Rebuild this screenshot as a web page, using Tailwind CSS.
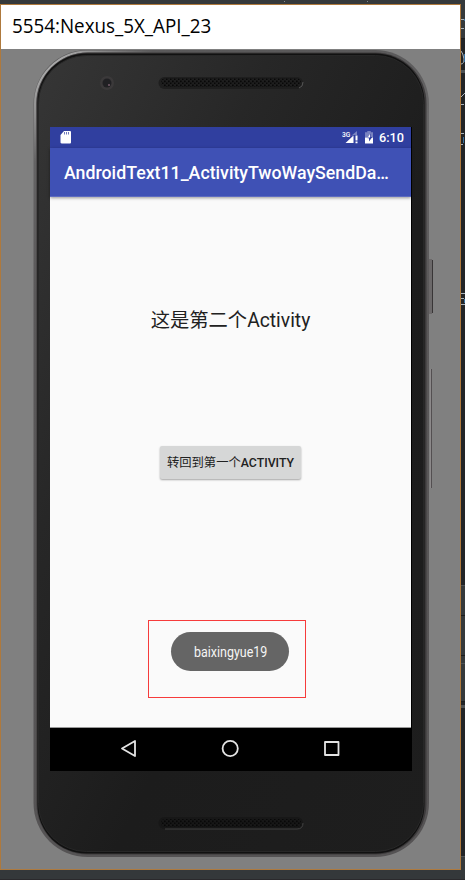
<!DOCTYPE html>
<html lang="zh-CN">
<head>
<meta charset="utf-8">
<title>5554:Nexus_5X_API_23</title>
<script src="https://cdn.jsdelivr.net/npm/@tailwindcss/browser@4"></script>
</head>
<body class="relative h-[880px] w-[465px] overflow-hidden bg-[#222426] pt-1 font-['Roboto','Noto_Sans_CJK_SC',sans-serif]">
  <!-- editor behind the emulator window -->
  <svg class="absolute inset-0" width="465" height="880" viewBox="0 0 465 880" fill="none">
    <path fill="#35393b" d="M0 0h465v4H0zM461 0h4v38h-4zM461 585h4v116h-4zM461 856h4v24h-4z"/>
    <path fill="#34383a" d="M0 870h465v10H0z"/>
    <path fill="#4d5153" d="M461 585h4v1h-4zM461 663h4v1h-4zM461 705h4v3h-4zM461 856h4v1h-4zM461 70h4v3h-4z"/>
    <path fill="#1b1d1e" d="M461 38h4v1h-4zM461 615h4v1h-4zM461 655h4v1h-4zM461 701h4v1h-4z"/>
    <path stroke="#2a292c" d="M0 879.5h465"/>
    <path fill="#85898b" d="M284 1h1v1h-1zM367 1h1v1h-1z"/>
    <path stroke="#aab3ba" d="M461 19.500h4M461 28.500h3M461 51q2 2 3 8q0 5-3 5M461 97l4-4M461 104.500h3M461 133.500h3M461 144.500h2M461 293.500h4M461 298.500h3M461 304.500h4"/>
    <path stroke="#39709e" d="M464.500 19v2M464.500 54v8M463.500 137v6M464.500 299v4"/>
  </svg>

  <main class="relative flex h-[866px] w-[461px] flex-col border border-[#ae793d] bg-[#808080]">
    <header class="flex h-11 shrink-0 items-center bg-white pl-[11px]">
      <h1 class="origin-left -translate-y-px scale-x-[0.94] whitespace-nowrap font-['Open_Sans',sans-serif] text-[20px] leading-none text-black">5554:Nexus_5X_API_23</h1>
    </header>

    <div class="relative ml-[33px] mt-px h-[807px] w-[395px]">
      <!-- phone shell -->
      <svg class="absolute inset-0 overflow-visible" width="395" height="807" viewBox="34 50 395 807" fill="none">
        <defs>
          <linearGradient id="face" x1="0" y1="0" x2="1" y2="1"><stop stop-color="#363636"/><stop offset=".3" stop-color="#272727"/><stop offset=".6" stop-color="#1c1c1c"/><stop offset="1" stop-color="#1e1e1e"/></linearGradient>
          <linearGradient id="rim" x1="0" y1="0" x2="0" y2="1"><stop stop-color="#5a595a"/><stop offset=".08" stop-color="#686768"/><stop offset=".3" stop-color="#5b595a"/><stop offset="1" stop-color="#555354"/></linearGradient>
          <linearGradient id="shine" x1="34" y1="50" x2="90" y2="110" gradientUnits="userSpaceOnUse"><stop offset=".2" stop-color="#b0b0b0"/><stop offset="1" stop-color="#b0b0b0" stop-opacity="0"/></linearGradient>
          <pattern id="mesh" width="4" height="4" patternUnits="userSpaceOnUse"><path fill="#080808" d="M0 .5h1.700v1.700H0zM2 2.500h1.500v1.500H2z"/></pattern>
        </defs>
        <path fill="#6b6869" d="M429 259h3v55h-3z"/><path stroke="#383536" d="M432.500 260v53"/>
        <path stroke="#8c898a" d="M430.500 369v119"/><path stroke="#534f51" d="M431.500 369v119"/>
        <rect x="33.500" y="50" width="395.500" height="807" rx="54" fill="url(#rim)"/>
        <rect x="35" y="51.500" width="392.500" height="804" rx="53" stroke="url(#shine)" stroke-width="2"/>
        <rect x="36.500" y="52.500" width="390" height="802" rx="51" fill="#3c3a3b"/>
        <rect x="37.500" y="53.500" width="387" height="800" rx="49" fill="#111"/>
        <rect x="38.500" y="55.500" width="385" height="796" rx="48" fill="url(#face)" stroke="#272727"/>
        <circle cx="107" cy="83" r="7" fill="#3b393a"/><circle cx="107" cy="83" r="4.500" fill="#202023"/><circle cx="109" cy="85" r="1" fill="#785e6e"/>
        <rect x="158.500" y="77" width="144.500" height="12" rx="6" fill="#1e1e1e"/><rect x="161" y="78" width="140" height="9" rx="4.500" fill="url(#mesh)"/><path stroke="#555" d="M299 88q4-1 4-6"/>
        <rect x="158.500" y="817" width="144.500" height="12" rx="6" fill="#171717"/><rect x="161" y="819" width="140" height="8" rx="4" fill="url(#mesh)"/><path stroke="#424242" d="M165 829h132q6 0 6-6"/>
      </svg>

      <section class="relative ml-4 pt-[77px]">
        <div class="flex h-[644px] w-[362px] flex-col bg-black">
          <div class="flex h-[21px] w-[361px] shrink-0 items-center bg-[#303f9f] text-white">
            <svg width="361" height="21" viewBox="50 127 361 21" fill="#fff">
              <path d="M64 131h6q1 0 1 1v10.500q0 1-1 1h-8q-1.500 0-1.500-1V135z"/><path stroke="#303f9f" stroke-width=".7" d="M64.500 132v2.500M66.500 132v2.500M68.500 132v2.500"/>
              <path d="m345.500 143 8-7.500v7.500zM355.500 135.500h2v5h-2zM355.500 141.500h2v1.700h-2z"/><path fill="#7983c0" d="m351 136 6-5v4h-3z"/>
              <path fill="#7983c0" d="M367.300 131h3.400v1.200h2.300v5.300h-8v-5.300h2.300z"/><path d="M365 137.500h8v6h-8z"/><path d="M370.500 133.500v3.500h1.800l-3.300 4.500v-3.300h-1.500z" fill="#303f9f"/>
              <path d="M370 134v3.500h-2.300z"/>
              <text transform="translate(342 136.500) scale(.95 1)" font-family="Roboto" font-size="7" font-weight="500">3G</text>
              <text x="379" y="142.300" font-family="Roboto" font-size="13.300" font-weight="500" textLength="25" lengthAdjust="spacingAndGlyphs">6:10</text>
            </svg>
          </div>
          <div class="relative z-10 flex h-[49px] w-[361px] shrink-0 items-center border-b border-[#5d6bc0] bg-[#3f51b5] pl-3.5 pt-[4px] shadow-[0_1px_3px_rgba(0,0,0,0.4)]">
            <h2 class="whitespace-nowrap text-[17.750px] font-medium leading-none text-white">AndroidText11_ActivityTwoWaySendDa…</h2>
          </div>
          <div class="flex h-[531px] w-[361px] shrink-0 flex-col items-center border-b border-[#999] bg-[#fafafa]">
            <p class="mt-[110px] h-7 whitespace-nowrap text-[19.300px] leading-7 text-[#212121]">这是第二个Activity</p>
            <button class="mt-[111px] h-[33px] w-[141px] whitespace-nowrap rounded-[2px] bg-[#d6d7d7] pt-px text-[12.300px] leading-[33px] text-[#212121] shadow-[0_1px_2px_rgba(0,0,0,0.35)]">转回到第一个<span class="font-medium">ACTIVITY</span></button>
            <div class="mt-[141px] h-[78px] w-[158px] -translate-x-[4px] border border-[#f63b3b] pl-[22px] pt-[11px]">
              <div class="flex h-[39px] w-[118px] items-center justify-center rounded-full bg-[#656565]">
                <span class="block translate-x-px translate-y-px scale-x-[0.86] whitespace-nowrap pt-px text-[14.500px] leading-5 text-[#f5f5f5]">baixingyue19</span>
              </div>
            </div>
          </div>
          <nav class="flex h-[43px] items-center">
            <svg width="362" height="43" viewBox="50 728 362 43" fill="none" stroke="#e4e4e4" stroke-width="1.800" stroke-linejoin="round">
              <path d="M135 741v15l-13-7.500z"/><circle cx="230.200" cy="748.500" r="7.600"/><rect x="325" y="742" width="13.500" height="13"/>
            </svg>
          </nav>
        </div>
      </section>
    </div>
  </main>
</body>
</html>
